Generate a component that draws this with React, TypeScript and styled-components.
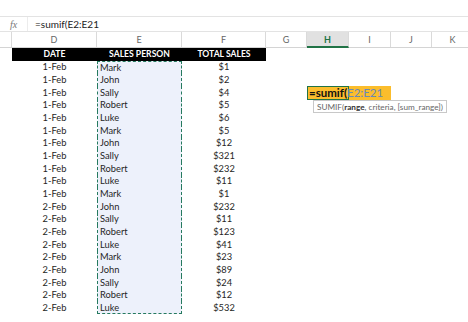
import React from "react";
import styled, { createGlobalStyle } from "styled-components";

const COLS = "12px 85px 85px 84px 41px 42px 42px 41px 42px";
const ROW_H = "12.68px";
const ANTS = "1px dashed #257a5f";

const rows: { date: string; name: string; total: string }[] = [
  { date: "1-Feb", name: "Mark", total: "$1" },
  { date: "1-Feb", name: "John", total: "$2" },
  { date: "1-Feb", name: "Sally", total: "$4" },
  { date: "1-Feb", name: "Robert", total: "$5" },
  { date: "1-Feb", name: "Luke", total: "$6" },
  { date: "1-Feb", name: "Mark", total: "$5" },
  { date: "1-Feb", name: "John", total: "$12" },
  { date: "1-Feb", name: "Sally", total: "$321" },
  { date: "1-Feb", name: "Robert", total: "$232" },
  { date: "1-Feb", name: "Luke", total: "$11" },
  { date: "1-Feb", name: "Mark", total: "$1" },
  { date: "2-Feb", name: "John", total: "$232" },
  { date: "2-Feb", name: "Sally", total: "$11" },
  { date: "2-Feb", name: "Robert", total: "$123" },
  { date: "2-Feb", name: "Luke", total: "$41" },
  { date: "2-Feb", name: "Mark", total: "$23" },
  { date: "2-Feb", name: "John", total: "$89" },
  { date: "2-Feb", name: "Sally", total: "$24" },
  { date: "2-Feb", name: "Robert", total: "$12" },
  { date: "2-Feb", name: "Luke", total: "$532" },
];

const letters = ["", "D", "E", "F", "G", "H", "I", "J", "K"];

const App: React.FC = () => {
  return (
    <Page>
      <GlobalStyle />
      <FormulaBar>
        <FxBox>fx</FxBox>
        <FormulaText>=sumif(E2:E21</FormulaText>
      </FormulaBar>
      <ColHeaderRow>
        {letters.map((l, i) => (
          <ColLetter key={i} active={l === "H"}>
            {l}
          </ColLetter>
        ))}
      </ColHeaderRow>
      <Row>
        <span />
        <HeadCell>DATE</HeadCell>
        <HeadCell>SALES PERSON</HeadCell>
        <HeadCell>TOTAL SALES</HeadCell>
      </Row>
      {rows.map((r, i) => (
        <Row key={i}>
          <span />
          <Cell>{r.date}</Cell>
          <NameCell first={i === 0} last={i === rows.length - 1}>
            {r.name}
          </NameCell>
          <Cell>{r.total}</Cell>
          {i === 2 && (
            <>
              <span />
              <EditCell>
                <ActiveBox>
                  =sumif(<RangeRef>E2:E21</RangeRef>
                  <Caret />
                </ActiveBox>
                <Tooltip>
                  SUMIF(<b>range</b>, criteria, [sum_range])
                </Tooltip>
              </EditCell>
            </>
          )}
        </Row>
      ))}
    </Page>
  );
};

const GlobalStyle = createGlobalStyle`
  html, body {
    margin: 0;
    padding: 0;
    background: #fff;
    overflow: hidden;
  }
  body {
    font-family: Lato, "Liberation Sans", sans-serif;
  }
`;

const Page = styled.div`
  width: 468px;
  height: 322px;
  padding-top: 16px;
  box-sizing: border-box;
  overflow: hidden;
`;

const FormulaBar = styled.div`
  height: 16px;
  display: flex;
  align-items: center;
  border-top: 1px solid #e3e3e3;
  border-bottom: 1px solid #e3e3e3;
  box-sizing: border-box;
`;

const FxBox = styled.div`
  width: 28px;
  height: 100%;
  display: flex;
  align-items: center;
  justify-content: center;
  font-family: "Liberation Serif", serif;
  font-style: italic;
  font-size: 10px;
  color: #777;
  border-right: 1px solid #ececec;
  box-sizing: border-box;
`;

const FormulaText = styled.div`
  padding-left: 7px;
  font-size: 10px;
  color: #222;
`;

const ColHeaderRow = styled.div`
  display: grid;
  grid-template-columns: ${COLS};
  height: 16px;
  border-bottom: 1px solid #d4d4d4;
  box-sizing: border-box;
`;

const ColLetter = styled.div<{ active?: boolean }>`
  display: flex;
  align-items: center;
  justify-content: center;
  font-size: 9px;
  color: ${({ active }) => (active ? "#217346" : "#666")};
  font-weight: ${({ active }) => (active ? 700 : 400)};
  background: ${({ active }) => (active ? "#e1e1e1" : "#fff")};
  border-right: 1px solid #dadada;
  border-bottom: ${({ active }) => (active ? "2px solid #217346" : "none")};
  box-sizing: border-box;
  margin-bottom: ${({ active }) => (active ? "-1px" : "0")};
`;

const Row = styled.div`
  display: grid;
  grid-template-columns: ${COLS};
  height: ${ROW_H};
  font-size: 9.3px;
  color: #262626;
`;

const HeadCell = styled.div`
  background: #000;
  color: #fff;
  font-weight: 700;
  font-size: 8.6px;
  display: flex;
  align-items: center;
  justify-content: center;
  line-height: 1;
`;

const Cell = styled.div`
  display: flex;
  align-items: center;
  justify-content: center;
  line-height: 1;
`;

const NameCell = styled.div<{ first?: boolean; last?: boolean }>`
  display: flex;
  align-items: center;
  padding-left: 2px;
  line-height: 1;
  background: #edf1fb;
  border-left: ${ANTS};
  border-right: ${ANTS};
  border-top: ${({ first }) => (first ? ANTS : "none")};
  border-bottom: ${({ last }) => (last ? ANTS : "none")};
  box-sizing: border-box;
`;

const EditCell = styled.div`
  grid-column: span 2;
  position: relative;
  background: #fbbd2c;
  display: flex;
  align-items: stretch;
`;

const ActiveBox = styled.div`
  width: 42px;
  border: 1px solid #217346;
  box-sizing: border-box;
  display: flex;
  align-items: center;
  padding-left: 1px;
  font-size: 11.5px;
  font-weight: 700;
  white-space: nowrap;
  line-height: 1;
  color: #111;
  overflow: visible;
`;

const RangeRef = styled.span`
  font-weight: 400;
  color: #6a88b8;
`;

const Caret = styled.span`
  display: inline-block;
  width: 1px;
  height: 11px;
  background: #222;
  margin-left: 1px;
`;

const Tooltip = styled.div`
  position: absolute;
  left: 6px;
  top: 14px;
  height: 13px;
  padding: 0 3px;
  display: flex;
  align-items: center;
  background: #fff;
  border: 1px solid #c8c8c8;
  box-sizing: border-box;
  font-size: 8.2px;
  color: #666;
  white-space: nowrap;

  b {
    color: #333;
    font-weight: 700;
  }
`;

export default App;
